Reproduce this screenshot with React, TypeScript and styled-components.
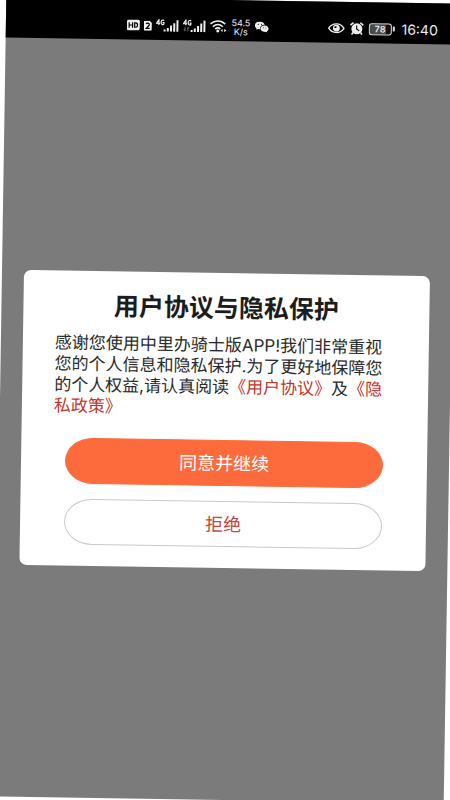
import React from 'react';
import styled, { createGlobalStyle } from 'styled-components';

const GlobalStyle = createGlobalStyle`
  * { box-sizing: border-box; }
  html, body { margin: 0; background: #fff; overflow: hidden; }
  body, button { font-family: Inter, "Noto Sans CJK SC", sans-serif; }
`;

const Screen = styled.div`
  display: flex;
  flex-direction: column;
  min-height: 100vh;
  background: #7b7b7b;
  transform: rotate(0.9deg);
`;

const StatusBar = styled.header`
  display: flex;
  align-items: center;
  justify-content: space-between;
  height: 41px;
  padding: 12px 18px 0 121px;
  background: #000;
  color: #eee;
`;

const StatusGroup = styled.div<{ $gap: number }>`
  display: flex;
  align-items: center;
  gap: ${(p) => p.$gap}px;

  svg { display: block; flex: none; }
`;

const Speed = styled.div`
  width: 20px;
  font-size: 9px;
  line-height: 9px;
  text-align: center;
`;

const Clock = styled.time`
  font-size: 14px;
  line-height: 16px;
`;

const Overlay = styled.main`
  flex: 1;
  display: flex;
  align-items: center;
  padding: 0 22px;
`;

const Dialog = styled.section`
  flex: 1;
  padding: 20px 32px 21px;
  border-radius: 7px;
  background: #fff;
`;

const Title = styled.h1`
  margin: 0 0 12px;
  font-size: 25px;
  line-height: 30px;
  font-weight: 700;
  text-align: center;
  color: #1c1c1c;
`;

const Message = styled.p`
  margin: 0;
  font-size: 17px;
  line-height: 21px;
  color: #2a2a2a;
`;

const PolicyLink = styled.a`
  color: #c2352f;
  text-decoration: none;
`;

const Actions = styled.div`
  display: flex;
  flex-direction: column;
  gap: 15px;
  padding: 21px 12px 0;
`;

const ActionButton = styled.button<{ $primary?: boolean }>`
  height: 46px;
  padding: 2px 0 0;
  border: 1px solid ${(p) => (p.$primary ? '#fd6b3c' : '#c9c9c9')};
  border-radius: 28px / 23px;
  background: ${(p) => (p.$primary ? '#fd6b3c' : '#fff')};
  color: ${(p) => (p.$primary ? '#fff' : '#c5463a')};
  font-size: 18px;
  line-height: 24px;
`;

const HdIcon = () => (
  <svg width="13" height="11" viewBox="0 0 13 11" aria-label="HD">
    <rect width="13" height="11" rx="2" fill="#eee" />
    <path d="M2.3 2.8v5.4M5.7 2.8v5.4M2.3 5.5h3.4M7.8 3.3v4.4h.9c2.6 0 2.6-4.4 0-4.4z" fill="none" stroke="#000" strokeWidth="1.2" />
  </svg>
);

const SimIcon = () => (
  <svg width="8" height="10" viewBox="0 0 8 10" aria-label="SIM 2">
    <path d="M1 0h4.6L8 2.2V9a1 1 0 0 1-1 1H1a1 1 0 0 1-1-1V1a1 1 0 0 1 1-1z" fill="#eee" />
    <path d="M2.2 3.3C2.8 1.8 5.8 2 5.4 4 5.1 5.2 3.4 6.4 2.4 7.6h3.5" fill="none" stroke="#000" strokeWidth="1.2" />
  </svg>
);

const SignalIcon = ({ data }: { data?: boolean }) => (
  <svg width="23" height="13" viewBox="0 0 23 13" aria-label="4G">
    <path
      d="M3 6V.8L.6 4.4h3.6M8 1.8C7.4.6 5.2.7 5.2 3.400S7.600 6 8 5.100V3.700H6.700"
      fill="none"
      stroke="#eee"
      strokeWidth="1.200"
    />
    {data && <path d="M2.200 7.500v4M1 10l1.200 1.600M5 12V8M5 7.800l1.200 1.500" fill="none" stroke="#666" strokeWidth="1" />}
    <path d="M7.800 10.500h2V12.500h-2zM11 9h2v3.500h-2zM14.200 6.500h2v6h-2zM17.400 4h2v8.500h-2zM20.600 1h2v11.500h-2z" fill="#eee" />
  </svg>
);

const WifiIcon = () => (
  <svg width="17" height="13" viewBox="0 0 17 13" aria-label="Wi-Fi">
    <path d="M.6 4.2c4.2-4 10.600-4 14.800 0M3 6.800c3-2.600 7-2.600 10 0M5.400 9.200c1.600-1.400 3.600-1.400 5.200 0" fill="none" stroke="#eee" strokeWidth="1.500" />
    <circle cx="8" cy="11.200" r="1.500" fill="#eee" />
    <path d="M10.800 10.600 12.800 9v3.200zM16.600 10.600 14.400 9v3.200z" fill="#eee" />
  </svg>
);

const ChatIcon = () => (
  <svg width="14" height="11" viewBox="0 0 14 11" aria-label="WeChat">
    <path d="M5 0C2.2 0 0 1.7 0 3.9 0 5.2.7 6.2 1.7 6.9L1.3 8.4 3.2 7.5c.7.2 1.3.3 2 .2C4.9 5.1 7 3.2 9.8 3.2 9.3 1.3 7.3 0 5 0z" fill="#eee" />
    <path d="M9.7 3.9c-2.3 0-4.1 1.4-4.1 3.2s1.8 3.2 4.1 3.2c.5 0 .9-.1 1.3-.2l1.5.8-.3-1.3c1-.6 1.6-1.500 1.6-2.500 0-1.800-1.800-3.200-4.100-3.200z" fill="#eee" />
    <g fill="#111">
      <circle cx="3.3" cy="2.8" r=".6" />
      <circle cx="6.6" cy="2.8" r=".6" />
      <circle cx="8.4" cy="6.3" r=".5" />
      <circle cx="11.1" cy="6.3" r=".5" />
    </g>
  </svg>
);

const EyeIcon = () => (
  <svg width="17" height="11" viewBox="0 0 17 11" aria-label="Eye comfort">
    <path d="M.8 5.5C4.5-.4 12.5-.4 16.2 5.5 12.5 11.200 4.500 11.200.8 5.500z" fill="none" stroke="#eee" strokeWidth="1.300" />
    <circle cx="8.500" cy="5.400" r="3.400" fill="#eee" />
    <path d="M8.500 5.300V3.200a2.200 2.200 0 0 0-2.200 2.100z" fill="#000" />
  </svg>
);

const AlarmIcon = () => (
  <svg width="14" height="13" viewBox="0 0 14 13" aria-label="Alarm">
    <circle cx="7" cy="6.800" r="5.500" fill="#eee" />
    <path d="M.6 3.300 3.600.6M13.400 3.300 10.400.6M3.300 10.500 1.800 12.500M10.700 10.500l1.500 2" stroke="#eee" strokeWidth="1.600" />
    <path d="M6.800 3.500V7l2.600 1.800" fill="none" stroke="#000" strokeWidth="1.100" />
  </svg>
);

const Battery = styled.div`
  display: flex;
  align-items: center;
  gap: 1px;
  margin-right: 2px;

  &::after {
    content: '';
    width: 2px;
    height: 5px;
    border-radius: 0 1px 1px 0;
    background: #ddd;
  }
`;

const BatteryLevel = styled.span`
  width: 23px;
  height: 12px;
  border: 1px solid #ddd;
  border-radius: 3px;
  background: linear-gradient(90deg, #4a4a4a 78%, #111 78%);
  font-size: 9px;
  line-height: 10px;
  font-weight: 600;
  text-align: center;
`;

export default function App() {
  return (
    <>
      <GlobalStyle />
      <Screen>
        <StatusBar>
          <StatusGroup $gap={4}>
            <HdIcon />
            <SimIcon />
            <SignalIcon />
            <SignalIcon data />
            <WifiIcon />
            <Speed>54.5 K/s</Speed>
            <ChatIcon />
          </StatusGroup>
          <StatusGroup $gap={5}>
            <EyeIcon />
            <AlarmIcon />
            <Battery>
              <BatteryLevel>78</BatteryLevel>
            </Battery>
            <Clock>16:40</Clock>
          </StatusGroup>
        </StatusBar>
        <Overlay>
          <Dialog role="dialog" aria-labelledby="policy-title">
            <Title id="policy-title">用户协议与隐私保护</Title>
            <Message>
              感谢您使用中里办骑士版APP!我们非常重视您的个人信息和隐私保护.为了更好地保障您的个人权益,请认真阅读
              <PolicyLink href="#agreement">《用户协议》</PolicyLink>及<PolicyLink href="#privacy">《隐私政策》</PolicyLink>
            </Message>
            <Actions>
              <ActionButton type="button" $primary>同意并继续</ActionButton>
              <ActionButton type="button">拒绝</ActionButton>
            </Actions>
          </Dialog>
        </Overlay>
      </Screen>
    </>
  );
}
